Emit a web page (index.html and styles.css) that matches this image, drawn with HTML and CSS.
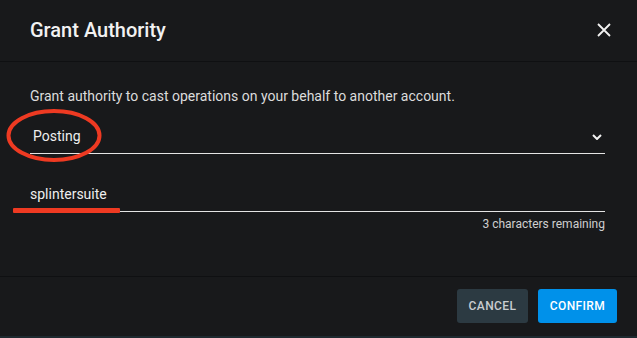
FILE: index.html
```html
<!DOCTYPE html>
<html>
<head>
<meta charset="utf-8">
<link rel="stylesheet" href="styles.css">
</head>
<body>
<div class="dialog">
  <header class="head">
    <h1 class="title">Grant Authority</h1>
    <button class="close" aria-label="Close">
      <svg width="14" height="14" viewBox="0 0 14 14"><path d="M1 1 L13 13 M13 1 L1 13" stroke="#f2f2f2" stroke-width="1.8" fill="none"/></svg>
    </button>
  </header>
  <main class="body">
    <p class="desc">Grant authority to cast operations on your behalf to another account.</p>
    <div class="select">
      <span class="select-value">Posting</span>
      <svg class="chev" width="10" height="6" viewBox="0 0 10 6"><path d="M1 1 L5 5 L9 1" stroke="#f2f2f2" stroke-width="2" fill="none"/></svg>
    </div>
    <div class="input">splintersuite</div>
    <div class="helper">3 characters remaining</div>
  </main>
  <footer class="foot">
    <button class="btn btn-cancel">Cancel</button>
    <button class="btn btn-confirm">Confirm</button>
  </footer>
  <div class="strip"></div>
  <svg class="mark-ellipse" width="100" height="60" viewBox="0 0 100 60"><ellipse cx="49" cy="29.5" rx="45.5" ry="24.5" stroke="#ee3a22" stroke-width="4" fill="none"/></svg>
  <div class="mark-line"></div>
</div>
</body>
</html>
```

FILE: styles.css
```css
* { box-sizing: border-box; }
html, body { margin: 0; padding: 0; }
body {
  background: #18191b;
  font-family: Roboto, "Liberation Sans", sans-serif;
  color: #e8e8e8;
  width: 637px;
  height: 338px;
  overflow: hidden;
}
.dialog {
  position: relative;
  width: 637px;
  height: 338px;
  display: flex;
  flex-direction: column;
}
.head {
  height: 62px;
  border-bottom: 1px solid #0f1012;
  display: flex;
  align-items: center;
  justify-content: space-between;
  padding: 0 26px 0 30px;
}
.title {
  margin: 0;
  font-size: 20px;
  font-weight: 500;
  color: #f2f2f2;
  line-height: 24px;
  padding-bottom: 1px;
}
.close {
  background: none;
  border: 0;
  padding: 0;
  width: 14px;
  height: 14px;
  display: flex;
  margin-bottom: 1px;
}
.body {
  height: 215px;
  padding: 24px 32px 0 30px;
  border-bottom: 1px solid #0f1012;
  display: flex;
  flex-direction: column;
}
.desc {
  margin: 0;
  font-size: 14px;
  line-height: 20px;
  color: #dcdcdc;
}
.select {
  margin-top: 16px;
  height: 32px;
  padding: 4px 3px 7px 3px;
  border-bottom: 1px solid #e4e4e4;
  display: flex;
  align-items: center;
  justify-content: space-between;
  font-size: 14px;
  line-height: 20px;
  color: #eeeeee;
}
.chev { margin-top: 1px; }
.input {
  margin-top: 26px;
  padding: 4px 0 7px 0;
  font-size: 14px;
  line-height: 20px;
  border-bottom: 1px solid #e4e4e4;
  color: #eeeeee;
}
.helper {
  margin-top: 4px;
  font-size: 12px;
  line-height: 16px;
  text-align: right;
  color: #cfcfcf;
}
.foot {
  flex: 1;
  display: flex;
  justify-content: flex-end;
  align-items: flex-start;
  gap: 10px;
  padding: 12px 20px 0 0;
}
.btn {
  height: 34px;
  border: 0;
  border-radius: 3px;
  font-family: Roboto, "Liberation Sans", sans-serif;
  font-size: 12px;
  font-weight: 500;
  text-transform: uppercase;
  letter-spacing: 0.4px;
  padding: 0;
}
.btn-cancel {
  width: 71px;
  background: #2c3a42;
  color: #c9cdd0;
}
.btn-confirm {
  width: 79px;
  background: #0091ea;
  color: #ffffff;
}
.strip {
  height: 2px;
  background: #1e2a30;
}
.mark-ellipse {
  position: absolute;
  left: 5px;
  top: 106px;
}
.mark-line {
  position: absolute;
  left: 13px;
  top: 208px;
  width: 107px;
  height: 5px;
  background: #ee3a22;
  border-radius: 1px;
}
```
